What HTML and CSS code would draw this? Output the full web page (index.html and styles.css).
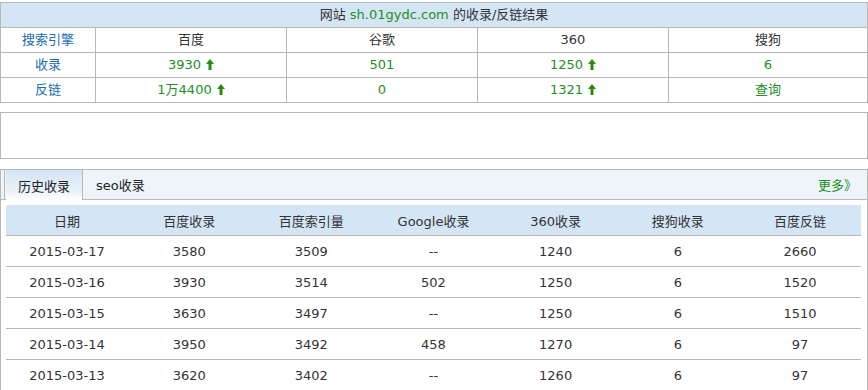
FILE: index.html
```html
<!DOCTYPE html>
<html>
<head>
<meta charset="utf-8">
<link rel="stylesheet" href="styles.css">
</head>
<body>
<table class="summary">
  <colgroup>
    <col class="c-first"><col class="c-mid"><col class="c-mid"><col class="c-mid"><col>
  </colgroup>
  <tr class="title-row">
    <td colspan="5">网站 <span class="green">sh.01gydc.com</span> 的收录/反链结果</td>
  </tr>
  <tr>
    <td class="blue">搜索引擎</td><td>百度</td><td>谷歌</td><td>360</td><td>搜狗</td>
  </tr>
  <tr class="green">
    <td class="blue">收录</td>
    <td>3930<svg class="up" width="8" height="11" viewBox="0 0 8 11"><path d="M4 0 L8 5 L5.5 5 L5.5 11 L2.5 11 L2.5 5 L0 5 Z"/></svg></td>
    <td>501</td>
    <td>1250<svg class="up" width="8" height="11" viewBox="0 0 8 11"><path d="M4 0 L8 5 L5.5 5 L5.5 11 L2.5 11 L2.5 5 L0 5 Z"/></svg></td>
    <td>6</td>
  </tr>
  <tr class="green">
    <td class="blue">反链</td>
    <td>1万4400<svg class="up" width="8" height="11" viewBox="0 0 8 11"><path d="M4 0 L8 5 L5.5 5 L5.5 11 L2.5 11 L2.5 5 L0 5 Z"/></svg></td>
    <td>0</td>
    <td>1321<svg class="up" width="8" height="11" viewBox="0 0 8 11"><path d="M4 0 L8 5 L5.5 5 L5.5 11 L2.5 11 L2.5 5 L0 5 Z"/></svg></td>
    <td>查询</td>
  </tr>
</table>

<div class="blank"></div>

<div class="history">
  <div class="tabbar">
    <div class="tabs">
      <span class="tab active">历史收录</span>
      <span class="tab">seo收录</span>
    </div>
    <span class="more">更多》</span>
  </div>
  <div class="body">
    <table class="data">
      <tr class="head"><th>日期</th><th>百度收录</th><th>百度索引量</th><th>Google收录</th><th>360收录</th><th>搜狗收录</th><th>百度反链</th></tr>
      <tr><td>2015-03-17</td><td>3580</td><td>3509</td><td>--</td><td>1240</td><td>6</td><td>2660</td></tr>
      <tr><td>2015-03-16</td><td>3930</td><td>3514</td><td>502</td><td>1250</td><td>6</td><td>1520</td></tr>
      <tr><td>2015-03-15</td><td>3630</td><td>3497</td><td>--</td><td>1250</td><td>6</td><td>1510</td></tr>
      <tr><td>2015-03-14</td><td>3950</td><td>3492</td><td>458</td><td>1270</td><td>6</td><td>97</td></tr>
      <tr><td>2015-03-13</td><td>3620</td><td>3402</td><td>--</td><td>1260</td><td>6</td><td>97</td></tr>
    </table>
  </div>
</div>
</body>
</html>
```

FILE: styles.css
```css
html, body {
  margin: 0;
  padding: 0;
  background: #fff;
}
body {
  font-family: "DejaVu Sans", Verdana, "Noto Sans CJK SC", sans-serif;
  font-size: 13px;
  color: #333;
  width: 868px;
  overflow: hidden;
}
.green { color: #1f8f1f; }
.blue { color: #1a6db3; }

.summary {
  margin-top: 2px;
  width: 868px;
  border-collapse: collapse;
  table-layout: fixed;
}
.summary col.c-first { width: 95px; }
.summary col.c-mid { width: 191px; }
.summary td {
  border: 1px solid #b8b8b8;
  height: 24px;
  padding: 0;
  text-align: center;
  vertical-align: middle;
  line-height: 24px;
}
.summary .title-row td {
  background: #d4e5f6;
  color: #333;
}
.summary tr.green td { color: #1f8f1f; }
.summary tr.green td.blue { color: #1a6db3; }
.up {
  margin-left: 5px;
  vertical-align: -1px;
  fill: #2a8a0a;
}

.blank {
  margin-top: 9px;
  height: 45px;
  border: 1px solid #b8b8b8;
}

.history {
  margin-top: 10px;
  border: 1px solid #b8b8b8;
  border-bottom: none;
  height: 230px;
}
.tabbar {
  display: flex;
  justify-content: space-between;
  align-items: stretch;
  height: 29px;
  background: #eef5f9;
  border-bottom: 1px solid #b8b8b8;
  padding-left: 3px;
}
.tabs {
  display: flex;
  border-left: 1px solid #b8b8b8;
}
.tab {
  display: flex;
  align-items: center;
  color: #222;
}
.tab.active {
  width: 76px;
  justify-content: center;
  border-right: 1px solid #b8b8b8;
  background: linear-gradient(#d3e4f5, #eaf2f9 70%, #ffffff);
  height: 30px;
  margin-left: 1px;
}
.tab:not(.active) {
  padding-left: 13px;
}
.more {
  display: flex;
  align-items: center;
  color: #1f8f1f;
  padding-right: 10px;
}

.body {
  padding: 5px;
}
.data {
  width: 855px;
  border-collapse: collapse;
  table-layout: fixed;
}
.data th, .data td {
  height: 30px;
  padding: 0;
  text-align: center;
  vertical-align: middle;
  border-bottom: 1px solid #b8b8b8;
  font-weight: normal;
  color: #333;
}
.data tr.head th {
  background: #d4e5f6;
}
```
